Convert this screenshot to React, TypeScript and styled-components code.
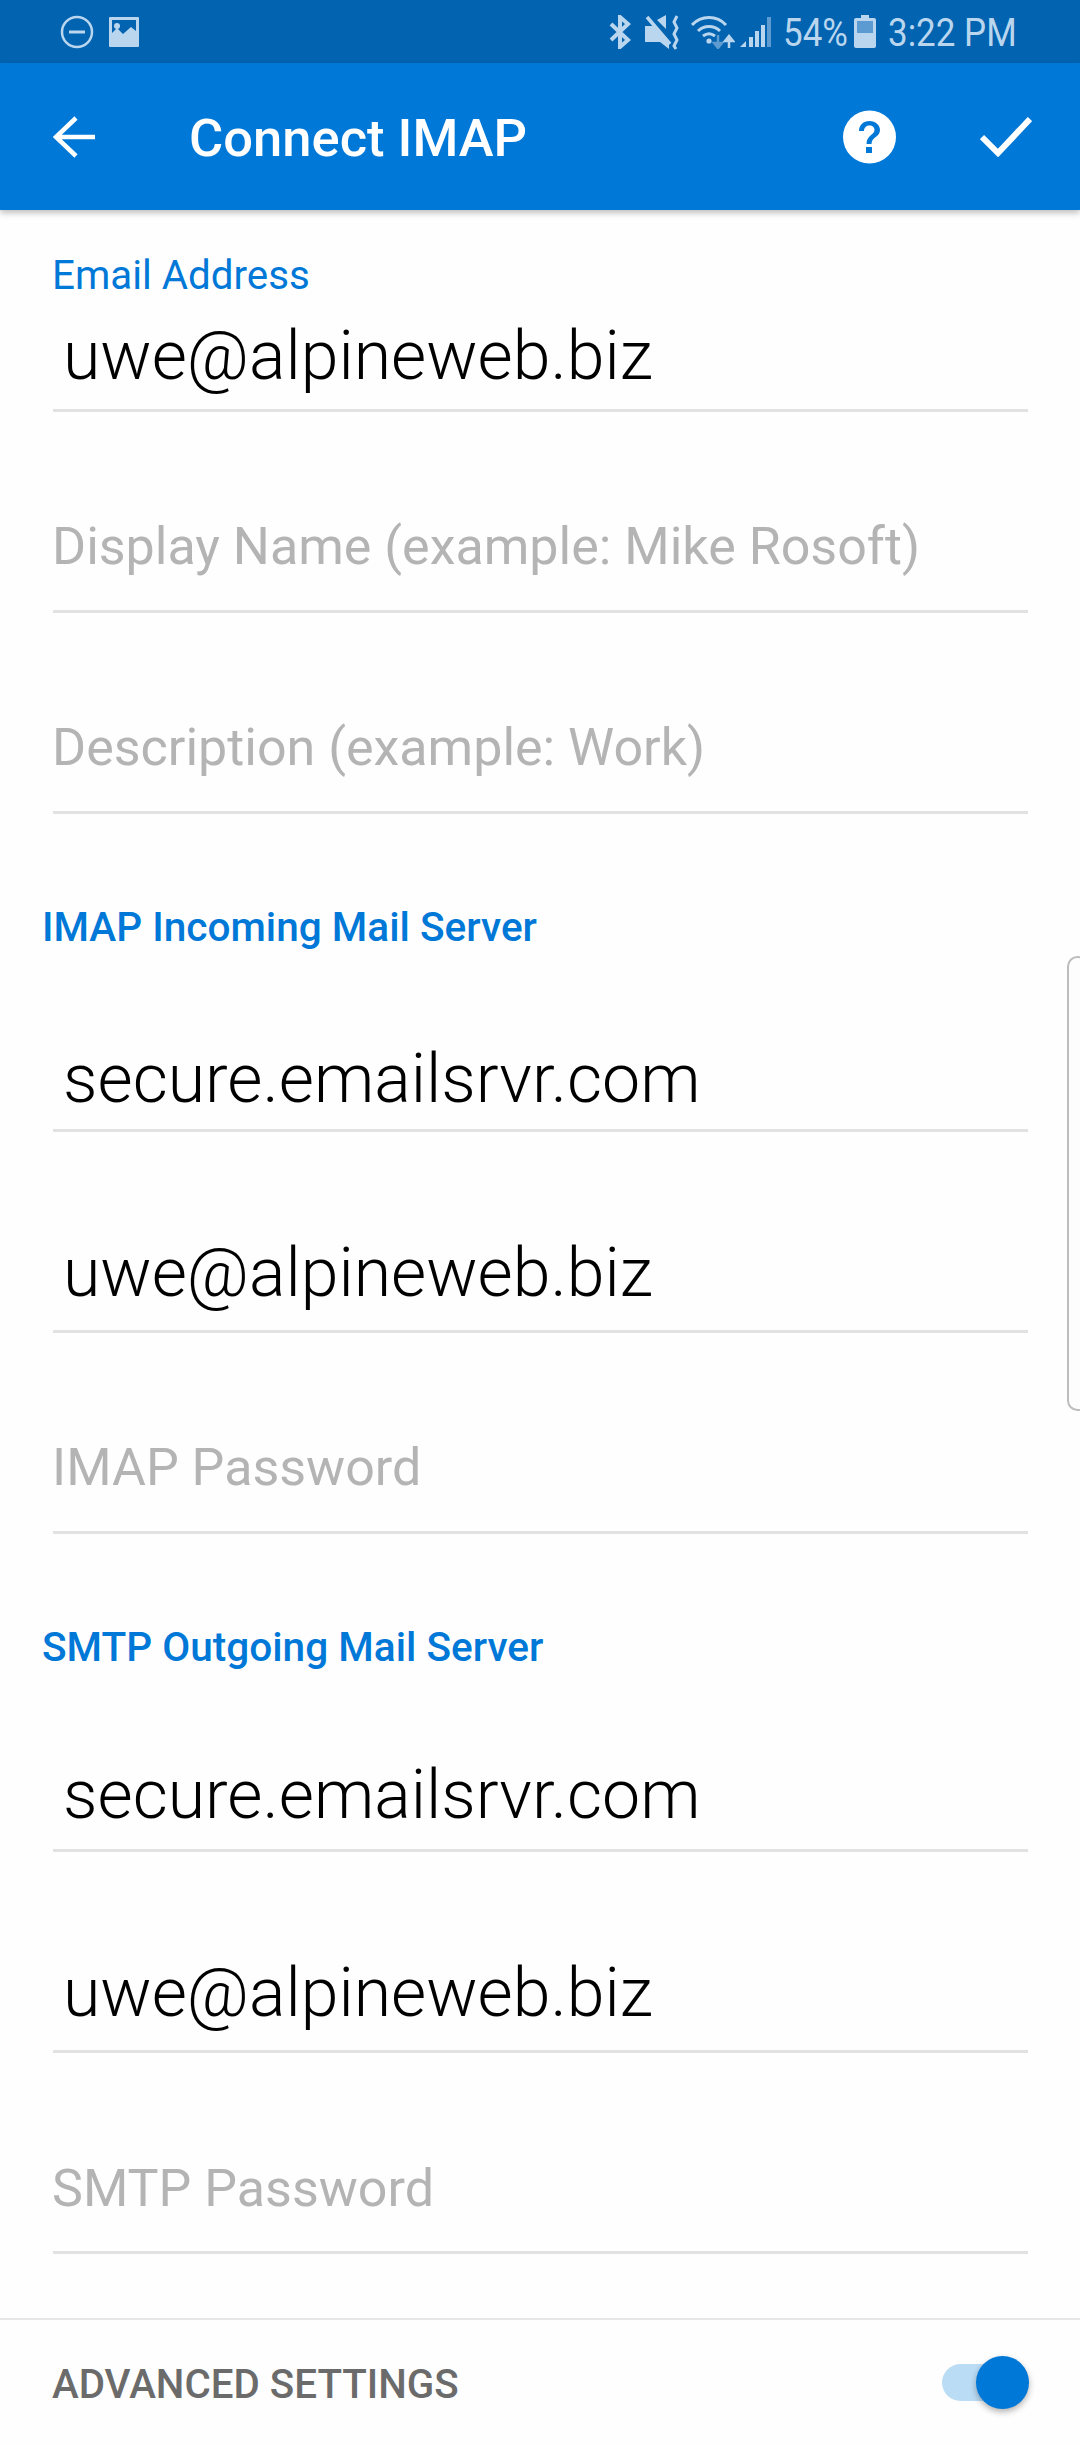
import React from "react";
import styled, { createGlobalStyle } from "styled-components";

const Global = createGlobalStyle`
  html, body { margin: 0; padding: 0; background: #fff; }
  * { box-sizing: border-box; }
`;

const Page = styled.div`
  position: relative;
  width: 1080px;
  height: 2445px;
  overflow: hidden;
  display: flex;
  flex-direction: column;
  background: #fefefe;
  font-family: Roboto, "Liberation Sans", sans-serif;
`;

const StatusBar = styled.div`
  height: 63px;
  flex: none;
  background: #0263b0;
  display: flex;
  align-items: center;
  padding: 0 63px 0 60px;
  color: #b9d6ee;
`;

const StatusLeft = styled.div`
  display: flex;
  align-items: center;
  gap: 14px;
`;

const StatusRight = styled.div`
  margin-left: auto;
  display: flex;
  align-items: center;
`;

const IconGap = styled.span<{ $w: number }>`
  display: block;
  flex: none;
  width: ${(p) => p.$w}px;
`;

const StatusText = styled.span<{ $w: number }>`
  display: block;
  width: ${(p) => p.$w}px;
  font-size: 38px;
  line-height: 63px;
  font-weight: 400;
  white-space: nowrap;
  padding-top: 3px;
  transform: scaleX(0.92);
  transform-origin: left center;
`;

const Toolbar = styled.header`
  position: relative;
  z-index: 1;
  height: 147px;
  flex: none;
  background: #0078d7;
  box-shadow: 0 3px 6px rgba(0, 0, 0, 0.25);
  display: flex;
  align-items: center;
  padding: 0 48px 0 53px;
  color: #fff;
`;

const Title = styled.h1`
  margin: 3px 0 0 94px;
  font-size: 52.5px;
  font-weight: 500;
  line-height: 60px;
  white-space: nowrap;
`;

const ToolbarActions = styled.div`
  margin-left: auto;
  display: flex;
  align-items: center;
  gap: 84px;
`;

const Form = styled.main`
  flex: 1;
  display: flex;
  flex-direction: column;
`;

const Field = styled.div<{ $h: number; $lift: number }>`
  height: ${(p) => p.$h}px;
  margin: 0 52px 0 53px;
  flex: none;
  display: flex;
  flex-direction: column;
  justify-content: flex-end;
  border-bottom: 3px solid #e2e2e2;
  padding-bottom: ${(p) => p.$lift}px;
`;

const FloatLabel = styled.label`
  font-size: 40.3px;
  line-height: 46px;
  color: #0078d7;
  white-space: nowrap;
  margin: 0 0 17px -1px;
`;

const Value = styled.div`
  font-size: 68px;
  line-height: 80px;
  font-weight: 300;
  color: #000;
  padding-left: 10px;
  white-space: nowrap;
`;

const Placeholder = styled.div`
  font-size: 52px;
  line-height: 60px;
  color: #b4b4b4;
  white-space: nowrap;
  margin-left: -1px;
`;

const SectionTitle = styled.h2`
  margin: 93px 0 0 42px;
  font-size: 40.6px;
  line-height: 40px;
  font-weight: 500;
  color: #0078d7;
  white-space: nowrap;
`;

const Footer = styled.footer`
  margin-top: auto;
  height: 127px;
  flex: none;
  border-top: 2px solid #e6e6e6;
  display: flex;
  align-items: center;
  justify-content: space-between;
  padding: 0 51px 0 53px;
`;

const FooterLabel = styled.span`
  font-size: 40.3px;
  font-weight: 500;
  color: #6b6b6b;
  white-space: nowrap;
  padding-top: 3px;
  margin-left: -1px;
`;

const Switch = styled.div`
  position: relative;
  width: 87px;
  height: 37px;
  border-radius: 19px;
  background: #bbdcf5;
`;

const Thumb = styled.div`
  position: absolute;
  right: 0;
  top: -8px;
  width: 53px;
  height: 53px;
  border-radius: 50%;
  background: #0078d7;
  box-shadow: 0 3px 6px rgba(0, 0, 0, 0.3);
`;

const EdgeHandle = styled.div`
  position: absolute;
  right: -8px;
  top: 956px;
  width: 21px;
  height: 455px;
  border: 2px solid #bdbdbd;
  border-radius: 12px;
  background: #fdfdfd;
`;

const DndIcon = () => (
  <svg width="34" height="34" viewBox="0 0 34 34" fill="none" stroke="#b9d6ee" strokeWidth="2.5">
    <circle cx="17" cy="17" r="15" />
    <path d="M9 17h16" strokeWidth="3" />
  </svg>
);

const ImageIcon = () => (
  <svg width="32" height="32" viewBox="0 0 32 32">
    <path
      fill="#b9d6ee"
      fillRule="evenodd"
      d="M2 1h28a1 1 0 0 1 1 1v28a1 1 0 0 1-1 1H2a1 1 0 0 1-1-1V2a1 1 0 0 1 1-1zM4 4v13l5-5 6 6 8-7 5 4V4z"
    />
    <circle cx="9" cy="10" r="3" fill="#b9d6ee" />
  </svg>
);

const BluetoothIcon = () => (
  <svg width="22" height="34" viewBox="0 0 22 34" fill="none" stroke="#b9d6ee" strokeWidth="4">
    <path d="M2 9l17 16-8 7V2l8 7L2 25" />
  </svg>
);

const MuteVibrateIcon = () => (
  <svg width="36" height="36" viewBox="0 0 36 36">
    <path fill="#b9d6ee" d="M1 12h7l2-2 15 17 0 8-9-7H1z" />
    <path fill="#b9d6ee" d="M13 6l9-5v14z" />
    <path d="M3 3l23 27" stroke="#b9d6ee" strokeWidth="3.5" />
    <path d="M33 2l-3 6 3 6-3 6 3 6-3 6 2 3" stroke="#b9d6ee" strokeWidth="3" fill="none" />
  </svg>
);

const WifiIcon = () => (
  <svg width="44" height="34" viewBox="0 0 44 34" fill="none">
    <path d="M1 10C10 0 26 0 35 10" stroke="#b9d6ee" strokeWidth="3" />
    <path d="M7 16c6-6 16-6 22 0" stroke="#b9d6ee" strokeWidth="3" />
    <path d="M12 21c4-3 8-3 12 0" stroke="#b9d6ee" strokeWidth="3" />
    <circle cx="18" cy="26" r="2.6" fill="#b9d6ee" />
    <path d="M27 20v12M23 28l4 5 4-5z" stroke="#5d9bd0" strokeWidth="2.5" fill="#5d9bd0" />
    <path d="M38 33V22M34 26l4-5 4 5z" stroke="#b9d6ee" strokeWidth="2.5" fill="#b9d6ee" />
  </svg>
);

const SignalIcon = () => (
  <svg width="32" height="32" viewBox="0 0 32 32">
    <path fill="#b9d6ee" d="M0 31l6-6v6zM9 21h4v10H9zM15 15h4v16h-4zM21 9h4v22h-4z" />
    <path fill="#5d9bd0" d="M27 1h4v30h-4z" />
  </svg>
);

const BatteryIcon = () => (
  <svg width="22" height="33" viewBox="0 0 22 33">
    <path fill="#b9d6ee" d="M7 0h8v3h5a2 2 0 0 1 2 2v26a2 2 0 0 1-2 2H2a2 2 0 0 1-2-2V5a2 2 0 0 1 2-2h5z" />
    <rect x="3" y="6" width="16" height="12" fill="#5b9bd1" />
  </svg>
);

const BackIcon = () => (
  <svg width="42" height="42" viewBox="0 0 42 42" fill="none" stroke="#fff" strokeWidth="4.5">
    <path d="M42 21H3M23 2L3 21l20 19" />
  </svg>
);

const HelpIcon = () => (
  <svg width="53" height="54" viewBox="0 0 53 54">
    <circle cx="26.5" cy="27" r="26.5" fill="#fff" />
    <path
      d="M16 21c0-6 4.5-10 10.500-10S37 15 37 20c0 7-8.500 7-8.500 14h-5c0-9 8-9 8-14 0-2.500-2-4.500-5-4.500s-5.500 2-5.500 5.500z"
      fill="#0078d7"
    />
    <rect x="23" y="37" width="6" height="6" fill="#0078d7" />
  </svg>
);

const CheckIcon = () => (
  <svg width="52" height="40" viewBox="0 0 52 40" fill="none" stroke="#fff" strokeWidth="6">
    <path d="M2 20l16 16L50 2" />
  </svg>
);

export default function App() {
  return (
    <Page>
      <Global />
      <StatusBar>
        <StatusLeft>
          <DndIcon />
          <ImageIcon />
        </StatusLeft>
        <StatusRight>
          <BluetoothIcon />
          <IconGap $w={13} />
          <MuteVibrateIcon />
          <IconGap $w={11} />
          <WifiIcon />
          <IconGap $w={5} />
          <SignalIcon />
          <IconGap $w={11} />
          <StatusText $w={71}>54%</StatusText>
          <BatteryIcon />
          <IconGap $w={12} />
          <StatusText $w={129}>3:22 PM</StatusText>
        </StatusRight>
      </StatusBar>
      <Toolbar>
        <BackIcon />
        <Title>Connect IMAP</Title>
        <ToolbarActions>
          <HelpIcon />
          <CheckIcon />
        </ToolbarActions>
      </Toolbar>
      <Form>
        <Field $h={202} $lift={13}>
          <FloatLabel>Email Address</FloatLabel>
          <Value>uwe@alpineweb.biz</Value>
        </Field>
        <Field $h={201} $lift={33}>
          <Placeholder>Display Name (example: Mike Rosoft)</Placeholder>
        </Field>
        <Field $h={201} $lift={33}>
          <Placeholder>Description (example: Work)</Placeholder>
        </Field>
        <SectionTitle>IMAP Incoming Mail Server</SectionTitle>
        <Field $h={185} $lift={10}>
          <Value>secure.emailsrvr.com</Value>
        </Field>
        <Field $h={201} $lift={17}>
          <Value>uwe@alpineweb.biz</Value>
        </Field>
        <Field $h={201} $lift={33}>
          <Placeholder>IMAP Password</Placeholder>
        </Field>
        <SectionTitle>SMTP Outgoing Mail Server</SectionTitle>
        <Field $h={185} $lift={14}>
          <Value>secure.emailsrvr.com</Value>
        </Field>
        <Field $h={201} $lift={17}>
          <Value>uwe@alpineweb.biz</Value>
        </Field>
        <Field $h={201} $lift={32}>
          <Placeholder>SMTP Password</Placeholder>
        </Field>
      </Form>
      <Footer>
        <FooterLabel>ADVANCED SETTINGS</FooterLabel>
        <Switch>
          <Thumb />
        </Switch>
      </Footer>
      <EdgeHandle />
    </Page>
  );
}
